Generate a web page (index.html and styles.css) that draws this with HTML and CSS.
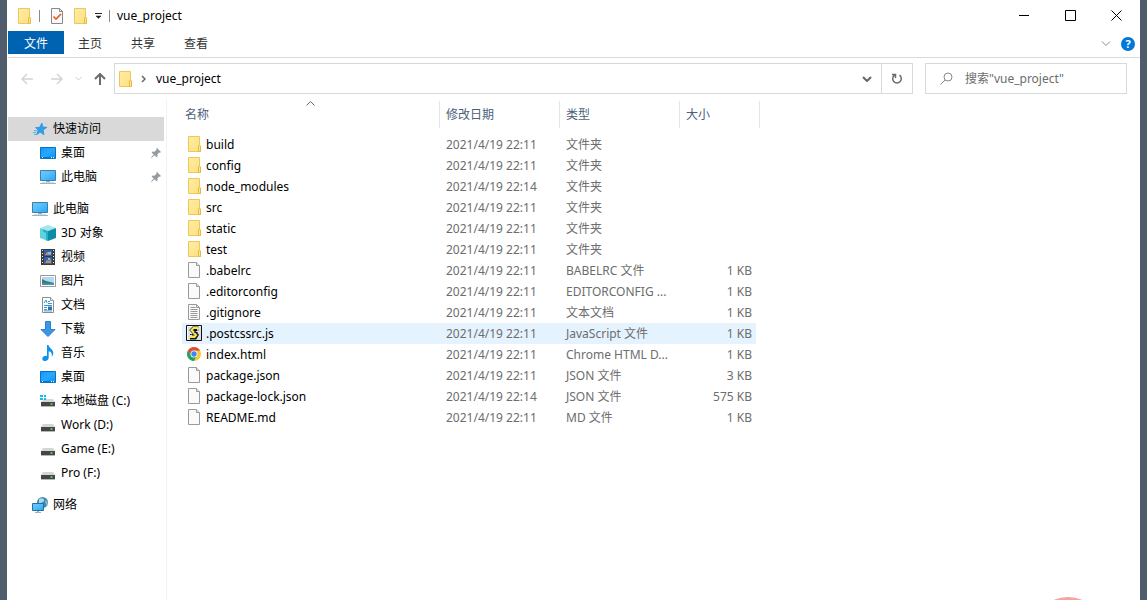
FILE: index.html
```html
<!DOCTYPE html>
<html lang="zh-CN">
<head>
<meta charset="utf-8">
<meta name="viewport" content="width=device-width, initial-scale=1">
<title>vue_project</title>
<link rel="stylesheet" href="styles.css">
</head>
<body>
<svg class="defs" aria-hidden="true">
  <defs>
    <linearGradient id="gFolder" x1="0" y1="0" x2="1" y2="1"><stop offset="0" stop-color="#ffeda6"/><stop offset="1" stop-color="#ffdf7c"/></linearGradient>
    <linearGradient id="gScreen" x1="0" y1="0" x2="1" y2="1"><stop offset="0" stop-color="#71cbfb"/><stop offset="0.5" stop-color="#52bbfa"/><stop offset="1" stop-color="#27a4f5"/></linearGradient>
    <linearGradient id="gDesk" x1="0" y1="0" x2="1" y2="1"><stop offset="0" stop-color="#0f98fa"/><stop offset="0.5" stop-color="#27a9ff"/><stop offset="1" stop-color="#0c91f6"/></linearGradient>
  </defs>
  <symbol id="folder" viewBox="0 0 16 16">
    <path d="M2.500.500h11v9l1 1v5h-12z" fill="url(#gFolder)" stroke="#ecc85a"/>
    <path d="M12.500 15.500v-5.500l1-1 1 1v5.500z" fill="#ffe592" stroke="#e4bb41"/>
  </symbol>
  <symbol id="file" viewBox="0 0 16 16">
    <path d="M2.500.500h8l3 3v12h-11z" fill="#fafafa" stroke="#9a9a9a"/>
    <path d="M10.500.500v3h3" fill="#e8e8e8" stroke="#9a9a9a"/>
  </symbol>
  <symbol id="text" viewBox="0 0 16 16">
    <path d="M2.500.500h8l3 3v12h-11z" fill="#fafafa" stroke="#9a9a9a"/>
    <path d="M10.500.500v3h3M4.500 3.500h5M4.500 5.500h7M4.500 7.500h7M4.500 9.500h7M4.500 11.500h7M4.500 13.500h7" fill="none" stroke="#999"/>
  </symbol>
  <symbol id="script" viewBox="0 0 16 16">
    <path d="M.5.500h15v15H.5z" fill="#dfe2e4" stroke="#111"/>
    <path d="M1.500 14.500v-13h13" fill="none" stroke="#fff"/>
    <path d="M12.500 3.500H7.500L6 5l4.500 5-1.500 2.500H4" fill="none" stroke="#111" stroke-width="4"/>
    <path d="M12.500 3H7.500L5.500 5l4.500 5-1.500 2H3.500" fill="none" stroke="#f5e84e" stroke-width="2.200"/>
    <path d="M8 5.500h3M8.500 7.500h3M4 9.500h3" stroke="#111" fill="none"/>
    <path d="M11 5l2-1.500M4 11l2-1" stroke="#fff"/>
  </symbol>
  <symbol id="chrome" viewBox="0 0 16 16">
    <circle cx="8" cy="8" r="7" fill="#fbc834"/>
    <path d="M1.940 4.500A7 7 0 0 1 14.060 4.500L8 4.800 5.230 9.600z" fill="#dd4b3e"/>
    <path d="M1.940 4.500A7 7 0 0 0 8 15l2.770-5.400H5.230z" fill="#1da462"/>
    <circle cx="8" cy="8" r="3.500" fill="#fff"/><circle cx="8" cy="8" r="2.700" fill="#4285f4"/>
  </symbol>
  <symbol id="star" viewBox="0 0 16 16">
    <path d="M10 2l.8 4 4.200.3-3.700 2.600.700 4.900-3.800-2.600-3.700 2.600 1.600-4.700L3.500 6.600l4-.3z" fill="#2aa1ed" stroke="#2289d3" stroke-width=".6"/>
    <path d="M2 9.500h3M1 11.500h3M2 13.500h2" stroke="#55b2ef" fill="none"/>
  </symbol>
  <symbol id="desktop" viewBox="0 0 16 16">
    <path d="M.5 2.500h15v11H.5z" fill="url(#gDesk)" stroke="#0a73bd"/>
    <path d="M1 12.500h14" stroke="#0877c9"/><path d="M2 12.500h1M11 12.500h1M13 12.500h1" stroke="#fff"/>
  </symbol>
  <symbol id="pc" viewBox="0 0 16 16">
    <path d="M.5 1.500h15v10H.5z" fill="url(#gScreen)" stroke="#3e7fa8"/>
    <path d="M6 12.500h4" stroke="#8eaabc"/><path d="M0 14.500h16" stroke="#9db2c1"/><path d="M2 13.500h12" stroke="#d3dde4"/>
  </symbol>
  <symbol id="cube" viewBox="0 0 16 16">
    <path d="M8 0l8 3-8 3-8-3z" fill="#a2e6ee"/><path d="M0 3l8 3v10l-8-3z" fill="#62d0de"/><path d="M16 3L8 6v10l8-3z" fill="#0b8ea5"/>
    <path d="M3 4.200L8 6v10l-2-.7V8L3 6.500z" fill="#25b3c8"/>
  </symbol>
  <symbol id="video" viewBox="0 0 16 16">
    <path d="M1 0h14v16H1z" fill="#3b3b3b"/><path d="M4 1h8v6H4zM4 8h8v7H4z" fill="#2c62bd"/>
    <path d="M2.500 1v15M13.500 1v15" stroke="#eee" stroke-dasharray="1 2"/>
    <path d="M5 6l2-3 2 1 2-2v4zM5 14l2-3 2 1 2-2v4z" fill="#d98b30"/><path d="M8 3h3v2H8zM8 9h2v2H8z" fill="#7cc3e8"/>
  </symbol>
  <symbol id="picture" viewBox="0 0 16 16">
    <path d="M.5 2.500h15v11H.5z" fill="#fff" stroke="#9a9a9a"/><path d="M2 4h12v8H2z" fill="#aed9f3"/>
    <path d="M2 6l4 2 8 2v2H2z" fill="#3d7a70"/><path d="M2 10l5 .5 7-.5v2H2z" fill="#4c91b7"/>
  </symbol>
  <symbol id="document" viewBox="0 0 16 16">
    <path d="M2.500.500h8l3 3v12h-11z" fill="#fff" stroke="#8c8c8c"/><path d="M10.500.500v3h3" fill="#eee" stroke="#999"/>
    <path d="M4 6l2-3 1 3M8 4.500h2M8 6.500h4M4 8.500h8M4 10.500h3M4 12.500h3M4 13.900h8" fill="none" stroke="#3398dc"/><path d="M8 9.500h4v3.500H8z" fill="#3572a0"/>
  </symbol>
  <symbol id="download" viewBox="0 0 16 16"><path d="M5.500.500h5v8h4.500L8 15.500 1 8.500h4.500z" fill="#3b97e6" stroke="#2b7fcb"/></symbol>
  <symbol id="music" viewBox="0 0 16 16"><path d="M7 0h1.500c.3 3 4.800 4 4.800 8 0 1.800-.8 3-1.600 3.600.8-3-.7-4.800-3-5.300v6.200C8.700 14.700 7 16 5 16c-1.600 0-2.700-.9-2.700-2.300 0-1.900 2.300-3.200 4.700-2.800z" fill="#0f92ee"/></symbol>
  <symbol id="drive" viewBox="0 0 16 16">
    <path d="M3 7h10l2 3H1z" fill="#d6d6d6"/><path d="M1 10h14v4H1z" fill="#464646"/><path d="M1 14.500h14" stroke="#b7b7b7"/><path d="M10.500 12h2" stroke="#4cf064" stroke-width="1.500"/>
  </symbol>
  <symbol id="sysdrive" viewBox="0 0 16 16">
    <path d="M4 6h9l2 3H1z" fill="#d6d6d6"/><path d="M1 9h14v4H1z" fill="#464646"/><path d="M1 13.500h14" stroke="#b7b7b7"/><path d="M10.500 11h2" stroke="#4cf064" stroke-width="1.500"/>
    <path d="M0 2h3v2H0zM4 2h2v2H4zM0 5h3v2H0zM4 5h2v2H4z" fill="#19b9ed"/>
  </symbol>
  <symbol id="network" viewBox="0 0 16 16">
    <circle cx="10.500" cy="5.500" r="5.500" fill="#4389af"/><path d="M7 2c3-2 6 0 5 2s-3 1-5 3z" fill="#a9d8e8"/><path d="M13 3l2.500 2-1 4z" fill="#92c6da"/>
    <path d="M.5 6.500h11v7H.5z" fill="url(#gScreen)" stroke="#23719f"/><path d="M3 15.500h6M5 14.500h2" stroke="#9db2c1"/>
  </symbol>
  <symbol id="pin" viewBox="0 0 10 10"><path d="M6 0l4 4-1 .8-1-.2-1.700 2 .2 1.800-.9.900L3.500 7.200.5 10 0 9.500l2.800-3L.7 4.400l.9-.9 1.800.2L5.400 2 5.200.8z" fill="#919ba1"/></symbol>
</svg>

<div class="window">
  <header class="titlebar">
    <div class="quick">
      <svg class="icon"><use href="#folder"/></svg>
      <i class="sep"></i>
      <button class="tool" aria-label="属性"><svg class="icon" viewBox="0 0 16 16"><path d="M2.500.500h8l3 3v12h-11z" fill="#fafafa" stroke="#888"/><path d="M10.500.500v3h3" fill="none" stroke="#888"/><path d="M4.500 8.500l2.500 2.500 5-5" fill="none" stroke="#ea5b21" stroke-width="1.700"/></svg></button>
      <button class="tool" aria-label="新建文件夹"><svg class="icon"><use href="#folder"/></svg></button>
      <button class="tool" aria-label="自定义快速访问工具栏"><svg class="menu-mark" viewBox="0 0 7 6"><path d="M0 .5h7" stroke="#222"/><path d="M1 3h5L3.500 5.500z" fill="#222" stroke="#222" stroke-width=".5"/></svg></button>
      <i class="sep"></i>
    </div>
    <h1 class="title">vue_project</h1>
    <div class="controls">
      <button class="control" aria-label="最小化"><svg viewBox="0 0 11 11"><path d="M0 5.500h10"/></svg></button>
      <button class="control" aria-label="最大化"><svg viewBox="0 0 11 11"><path d="M.5.500h10v10h-10z"/></svg></button>
      <button class="control" aria-label="关闭"><svg viewBox="0 0 11 11"><path d="M.5.500l10 10M10.500.500l-10 10"/></svg></button>
    </div>
  </header>

  <div class="ribbon">
    <button class="tab tab-file">文件</button>
    <button class="tab">主页</button>
    <button class="tab">共享</button>
    <button class="tab">查看</button>
    <div class="ribbon-end">
      <button class="tool" aria-label="展开功能区"><svg class="expand" viewBox="0 0 10 6"><path d="M1 .5l4 4 4-4"/></svg></button>
      <button class="help" aria-label="帮助">?</button>
    </div>
  </div>

  <div class="toolbar">
    <div class="history">
      <button class="tool" aria-label="返回" disabled><svg class="arrow" viewBox="0 0 12 12"><path d="M12 6H1M6 1L1 6l5 5"/></svg></button>
      <button class="tool" aria-label="前进" disabled><svg class="arrow" viewBox="0 0 12 12"><path d="M0 6h11M6 1l5 5-5 5"/></svg></button>
      <button class="tool" aria-label="最近位置" disabled><svg class="recent" viewBox="0 0 7 5"><path d="M.5 1l3 3 3-3"/></svg></button>
      <button class="tool" aria-label="上移"><svg class="arrow up" viewBox="0 0 12 12"><path d="M6 12V1M1 6l5-5 5 5"/></svg></button>
    </div>
    <div class="address">
      <svg class="icon"><use href="#folder"/></svg>
      <svg class="crumb" viewBox="0 0 5 8"><path d="M1 1l3 3-3 3"/></svg>
      <a class="path" href="#">vue_project</a>
      <button class="drop" aria-label="历史位置"><svg viewBox="0 0 10 6"><path d="M1 1l4 4 4-4"/></svg></button>
      <button class="refresh" aria-label="刷新"><svg viewBox="0 0 12 12"><path d="M8.500 2.200A4.300 4.300 0 1 1 3.500 2.200M1 1.500h3.500V5"/></svg></button>
    </div>
    <label class="search">
      <svg viewBox="0 0 13 13"><circle cx="8" cy="5" r="4"/><path d="M5 8L.5 12.500"/></svg>
      <input type="text" placeholder='搜索"vue_project"' aria-label="搜索">
    </label>
  </div>

  <div class="body">
    <nav class="sidebar">
      <ul class="group">
        <li><a class="node top current" href="#"><svg class="icon"><use href="#star"/></svg>快速访问</a></li>
        <li><a class="node" href="#"><svg class="icon"><use href="#desktop"/></svg>桌面<svg class="pin"><use href="#pin"/></svg></a></li>
        <li><a class="node" href="#"><svg class="icon"><use href="#pc"/></svg>此电脑<svg class="pin"><use href="#pin"/></svg></a></li>
      </ul>
      <ul class="group">
        <li><a class="node top" href="#"><svg class="icon"><use href="#pc"/></svg>此电脑</a></li>
        <li><a class="node" href="#"><svg class="icon"><use href="#cube"/></svg>3D 对象</a></li>
        <li><a class="node" href="#"><svg class="icon"><use href="#video"/></svg>视频</a></li>
        <li><a class="node" href="#"><svg class="icon"><use href="#picture"/></svg>图片</a></li>
        <li><a class="node" href="#"><svg class="icon"><use href="#document"/></svg>文档</a></li>
        <li><a class="node" href="#"><svg class="icon"><use href="#download"/></svg>下载</a></li>
        <li><a class="node" href="#"><svg class="icon"><use href="#music"/></svg>音乐</a></li>
        <li><a class="node" href="#"><svg class="icon"><use href="#desktop"/></svg>桌面</a></li>
        <li><a class="node" href="#"><svg class="icon"><use href="#sysdrive"/></svg>本地磁盘 (C:)</a></li>
        <li><a class="node" href="#"><svg class="icon"><use href="#drive"/></svg>Work (D:)</a></li>
        <li><a class="node" href="#"><svg class="icon"><use href="#drive"/></svg>Game (E:)</a></li>
        <li><a class="node" href="#"><svg class="icon"><use href="#drive"/></svg>Pro (F:)</a></li>
      </ul>
      <ul class="group">
        <li><a class="node top" href="#"><svg class="icon"><use href="#network"/></svg>网络</a></li>
      </ul>
    </nav>

    <main class="files">
      <table class="list">
        <colgroup><col class="c-name"><col class="c-date"><col class="c-type"><col class="c-size"><col class="c-end"></colgroup>
        <thead>
          <tr>
            <th aria-sort="ascending"><span class="head">名称<svg class="sort" viewBox="0 0 9 5"><path d="M.5 4.500l4-4 4 4"/></svg></span></th>
            <th><span class="head">修改日期</span></th>
            <th><span class="head">类型</span></th>
            <th colspan="2"><span class="head">大小</span></th>
          </tr>
        </thead>
        <tbody>
          <tr><td><span class="name"><svg class="icon"><use href="#folder"/></svg>build</span></td><td>2021/4/19 22:11</td><td>文件夹</td><td></td></tr>
          <tr><td><span class="name"><svg class="icon"><use href="#folder"/></svg>config</span></td><td>2021/4/19 22:11</td><td>文件夹</td><td></td></tr>
          <tr><td><span class="name"><svg class="icon"><use href="#folder"/></svg>node_modules</span></td><td>2021/4/19 22:14</td><td>文件夹</td><td></td></tr>
          <tr><td><span class="name"><svg class="icon"><use href="#folder"/></svg>src</span></td><td>2021/4/19 22:11</td><td>文件夹</td><td></td></tr>
          <tr><td><span class="name"><svg class="icon"><use href="#folder"/></svg>static</span></td><td>2021/4/19 22:11</td><td>文件夹</td><td></td></tr>
          <tr><td><span class="name"><svg class="icon"><use href="#folder"/></svg>test</span></td><td>2021/4/19 22:11</td><td>文件夹</td><td></td></tr>
          <tr><td><span class="name"><svg class="icon"><use href="#file"/></svg>.babelrc</span></td><td>2021/4/19 22:11</td><td>BABELRC 文件</td><td>1 KB</td></tr>
          <tr><td><span class="name"><svg class="icon"><use href="#file"/></svg>.editorconfig</span></td><td>2021/4/19 22:11</td><td>EDITORCONFIG ...</td><td>1 KB</td></tr>
          <tr><td><span class="name"><svg class="icon"><use href="#text"/></svg>.gitignore</span></td><td>2021/4/19 22:11</td><td>文本文档</td><td>1 KB</td></tr>
          <tr class="hover"><td><span class="name"><svg class="icon"><use href="#script"/></svg>.postcssrc.js</span></td><td>2021/4/19 22:11</td><td>JavaScript 文件</td><td>1 KB</td></tr>
          <tr><td><span class="name"><svg class="icon"><use href="#chrome"/></svg>index.html</span></td><td>2021/4/19 22:11</td><td>Chrome HTML D...</td><td>1 KB</td></tr>
          <tr><td><span class="name"><svg class="icon"><use href="#file"/></svg>package.json</span></td><td>2021/4/19 22:11</td><td>JSON 文件</td><td>3 KB</td></tr>
          <tr><td><span class="name"><svg class="icon"><use href="#file"/></svg>package-lock.json</span></td><td>2021/4/19 22:14</td><td>JSON 文件</td><td>575 KB</td></tr>
          <tr><td><span class="name"><svg class="icon"><use href="#file"/></svg>README.md</span></td><td>2021/4/19 22:11</td><td>MD 文件</td><td>1 KB</td></tr>
        </tbody>
      </table>
    </main>
  </div>
  <div class="bubble"></div>
</div>
</body>
</html>
```

FILE: styles.css
```css
* { box-sizing: border-box; }

body {
  margin: 0;
  padding: 0 7px;
  background: #505d6c;
  color: #000;
  font: 12px/16px "Noto Sans", "Noto Sans CJK SC", sans-serif;
}

button, input { font: inherit; color: inherit; margin: 0; padding: 0; border: 0; background: none; }
button { display: flex; align-items: center; justify-content: center; }
a { color: inherit; text-decoration: none; }
svg { display: block; flex: none; fill: none; }

.defs { position: absolute; width: 0; height: 0; }
.icon { width: 16px; height: 16px; }

.window {
  position: relative;
  display: flex;
  flex-direction: column;
  min-height: 100vh;
  padding-left: 1px;
  background: #fff;
  overflow: hidden;
}

/* Title bar */
.titlebar { display: flex; align-items: center; height: 31px; }
.quick { display: flex; align-items: center; gap: 7px; padding-left: 8px; }
.sep { width: 1px; height: 12px; background: #8a8a8a; }
.quick .tool:nth-of-type(1) { margin-left: 2px; }
.menu-mark { width: 7px; height: 6px; }
.title { flex: 1; margin: 0; padding-left: 7px; font-size: 12px; font-weight: 400; }
.controls { display: flex; padding-right: 1px; }
.control { width: 46px; height: 30px; }
.control svg { width: 11px; height: 11px; stroke: #000; }

/* Ribbon */
.ribbon { display: flex; height: 27px; padding-bottom: 3px; border-bottom: 1px solid #dadada; }
.tab { padding: 2px 14px 0; margin-right: 1px; color: #333; }
.tab-file { padding: 2px 16px 0; margin-right: 0; background: #0063b1; color: #fff; }
.ribbon-end { display: flex; align-items: center; gap: 10px; margin-left: auto; padding: 3px 5px 0 0; }
.expand { width: 10px; height: 6px; stroke: #888; }
.help { width: 14px; height: 14px; border-radius: 50%; background: #0078d7; color: #fff; font-size: 11px; font-weight: 700; }

/* Navigation toolbar */
.toolbar { display: flex; align-items: center; height: 41px; padding: 0 13px; }
.history { display: flex; align-items: center; gap: 12px; margin-right: 8px; }
.history .tool:first-child { margin-right: 6px; }
.arrow { width: 12px; height: 12px; stroke: #d4d4d4; stroke-width: 1.5; }
.arrow.up { stroke: #6b6b6b; stroke-width: 2; }
.recent { width: 7px; height: 5px; stroke: #ccc; }
.address { display: flex; align-items: center; flex: 1; height: 31px; padding-left: 2px; border: 1px solid #d9d9d9; }
.crumb { width: 5px; height: 8px; margin: 0 10px 0 8px; stroke: #666; stroke-width: 1.5; }
.path { flex: 1; }
.drop { width: 29px; height: 29px; }
.drop svg { width: 10px; height: 6px; stroke: #666; stroke-width: 2; }
.refresh { width: 31px; height: 29px; border-left: 1px solid #d9d9d9; }
.refresh svg { width: 12px; height: 12px; stroke: #6b6b6b; stroke-width: 1.5; }
.search { display: flex; align-items: center; gap: 12px; width: 202px; height: 31px; margin-left: 12px; padding-left: 14px; border: 1px solid #d9d9d9; }
.search svg { width: 13px; height: 13px; stroke: #888; }
.search input { flex: 1; min-width: 0; outline: 0; }
.search input::placeholder { color: #6d6d6d; opacity: 1; }

/* Body */
.body { display: flex; flex: 1; }
.sidebar { width: 159px; padding: 18px 2px 0 0; border-right: 1px solid #f3f3f3; }
.group { margin: 0 0 8px; padding: 0; list-style: none; }
.node { display: flex; align-items: center; gap: 5px; height: 24px; padding: 0 3px 0 32px; white-space: nowrap; }
.node.top { padding-left: 24px; }
.node.current { background: #d9d9d9; }
.pin { width: 10px; height: 10px; margin-left: auto; }

/* File list */
.files { flex: 1; padding: 2px 0 0 15px; }
.list { table-layout: fixed; width: 578px; border-collapse: collapse; }
.c-name { width: 258px; }
.c-date, .c-type { width: 120px; }
.c-size { width: 76px; }
.c-end { width: 4px; }
.list th { padding: 0 0 6px; font-weight: 400; text-align: left; color: #4c607a; }
.head { position: relative; display: flex; align-items: center; height: 27px; padding-left: 6px; border-right: 1px solid #e5e5e5; }
.list th:first-child .head { padding-left: 3px; }
.sort { position: absolute; top: 0; left: 0; right: 0; width: 9px; height: 5px; margin: 0 auto; stroke: #666; }
.list td { height: 21px; padding: 0 0 0 6px; color: #6d6d6d; white-space: nowrap; }
.list td:first-child { padding-left: 4px; color: #000; }
.list td:nth-child(4) { padding: 0 4px 0 0; text-align: right; }
.name { display: flex; align-items: center; gap: 4px; height: 21px; }
.name .icon { margin-bottom: 1px; }
.hover td { background: #e5f3ff; }

/* Floating bubble peeking in from the bottom edge */
.bubble { position: absolute; right: 36px; bottom: -69px; width: 72px; height: 72px; border-radius: 50%; background: #f9a0a0; }
```
